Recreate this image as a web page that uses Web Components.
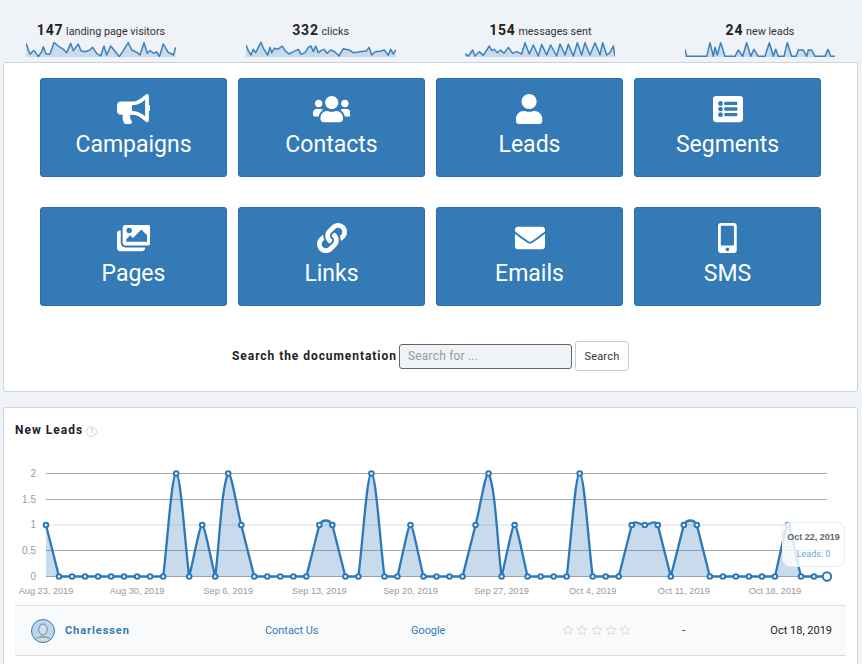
<!DOCTYPE html>
<html lang="en"><head><meta charset="utf-8"><title>Dashboard</title>
<style>
html,body{margin:0;padding:0;height:664px;overflow:hidden;background:#eff2f7;font-family:Roboto,"Liberation Sans",sans-serif;color:#222}
</style></head><body>
<dash-page>
  <stat-row>
    <stat-item value="147" points="78,100 90,133 100,122 105,125 115,140 125,125 130,110 138,132 150,132 162,98 175,108 190,118 200,128 212,100 220,122 235,102 243,122 255,125 270,120 278,112 290,130 302,138 312,108 320,135 332,108 350,130 358,140 372,118 385,98 395,120 412,128 420,135 432,98 442,130 450,122 462,130 470,125 478,140 490,102 505,128 512,130 520,135 527,112" origin="78">landing page visitors</stat-item>
    <stat-item value="332" points="63,105 70,122 78,135 85,118 92,128 100,112 108,97 115,115 128,135 135,112 140,128 148,115 158,118 172,108 180,122 192,132 205,125 220,118 228,133 240,128 250,112 258,108 265,125 272,108 280,128 288,122 298,118 306,130 318,120 330,126 342,138 355,116 372,120 385,128 400,126 415,124 425,122 432,112 440,135 450,125 465,124 478,120 490,136 497,118 505,132 512,120" origin="63">clicks</stat-item>
    <stat-item value="154" points="45,132 55,138 68,120 75,138 88,125 100,136 118,108 125,122 132,118 142,128 152,120 162,130 175,112 188,130 200,125 215,132 225,98 238,132 250,105 265,138 275,103 290,135 302,105 320,138 330,102 345,135 355,103 370,138 382,98 395,135 405,98 420,135 435,98 450,135 458,98 470,135 480,128 490,108 495,138" origin="45">messages sent</stat-item>
    <stat-item value="24" points="75,118 80,139 140,139 150,98 160,139 165,112 172,135 182,98 195,139 225,139 235,120 248,139 260,98 272,139 282,118 295,139 315,139 328,98 340,139 347,118 355,139 372,139 382,98 395,139 408,139 415,120 430,120 440,139 445,120 455,120 465,139 495,139 504,118 512,139 525,139" origin="75">new leads</stat-item>
  </stat-row>
  <dash-card class="menu">
    <tile-grid>
      <nav-tile icon="bullhorn">Campaigns</nav-tile>
      <nav-tile icon="users">Contacts</nav-tile>
      <nav-tile icon="user">Leads</nav-tile>
      <nav-tile icon="list">Segments</nav-tile>
      <nav-tile icon="images">Pages</nav-tile>
      <nav-tile icon="link">Links</nav-tile>
      <nav-tile icon="envelope">Emails</nav-tile>
      <nav-tile icon="mobile">SMS</nav-tile>
    </tile-grid>
    <doc-search></doc-search>
  </dash-card>
  <dash-card class="leads">
    <leads-panel></leads-panel>
  </dash-card>
</dash-page>
<script>
const ICONS={
bullhorn:['0 0 576 512','M576 240c0-23.63-12.95-44.04-32-55.12V32.01C544 23.26 537.02 0 512 0c-7.12 0-14.19 2.38-19.98 7.02l-85.03 68.03C364.28 109.19 310.66 128 256 128H64c-35.35 0-64 28.65-64 64v96c0 35.35 28.65 64 64 64h33.7c-1.39 10.48-2.18 21.14-2.18 32 0 39.77 9.26 77.35 25.56 110.94 5.19 10.69 16.52 17.06 28.4 17.06h74.28c26.05 0 41.69-29.84 25.9-50.56-16.4-21.52-26.15-48.36-26.15-77.44 0-11.11 1.62-21.79 4.41-32H256c54.66 0 108.28 18.81 150.98 52.95l85.03 68.03a32.023 32.023 0 0 0 19.98 7.02c24.92 0 32-22.78 32-32V295.13C563.05 284.04 576 263.63 576 240zm-96 141.42l-33.05-26.44C392.95 311.78 325.12 288 256 288v-96c69.12 0 136.95-23.78 190.95-66.98L480 98.58v282.84z'],
users:['0 0 640 512','M96 224c35.3 0 64-28.7 64-64s-28.7-64-64-64-64 28.7-64 64 28.7 64 64 64zm448 0c35.3 0 64-28.7 64-64s-28.7-64-64-64-64 28.7-64 64 28.7 64 64 64zm32 32h-64c-17.6 0-33.5 7.1-45.1 18.6 40.3 22.1 68.9 62 75.1 109.4h66c17.7 0 32-14.3 32-32v-32c0-35.3-28.7-64-64-64zm-256 0c61.9 0 112-50.1 112-112S381.9 32 320 32 208 82.1 208 144s50.1 112 112 112zm76.8 32h-8.3c-20.8 10-43.9 16-68.5 16s-47.6-6-68.5-16h-8.3C179.6 288 128 339.6 128 403.2V432c0 26.5 21.5 48 48 48h288c26.5 0 48-21.5 48-48v-28.8c0-63.6-51.6-115.2-115.2-115.2zm-223.7-13.4C161.5 263.1 145.6 256 128 256H64c-35.3 0-64 28.7-64 64v32c0 17.7 14.3 32 32 32h65.9c6.3-47.4 34.9-87.3 75.2-109.4z'],
user:['0 0 448 512','M224 256c70.7 0 128-57.3 128-128S294.7 0 224 0 96 57.3 96 128s57.3 128 128 128zm89.6 32h-16.7c-22.2 10.2-46.9 16-72.9 16s-50.6-5.8-72.9-16h-16.7C60.2 288 0 348.2 0 422.4V464c0 26.5 21.5 48 48 48h352c26.5 0 48-21.5 48-48v-41.6c0-74.2-60.2-134.4-134.4-134.4z'],
list:['0 0 512 512','M464 480H48c-26.51 0-48-21.49-48-48V80c0-26.51 21.49-48 48-48h416c26.51 0 48 21.49 48 48v352c0 26.51-21.49 48-48 48zM128 120c-22.091 0-40 17.909-40 40s17.909 40 40 40 40-17.909 40-40-17.909-40-40-40zm0 96c-22.091 0-40 17.909-40 40s17.909 40 40 40 40-17.909 40-40-17.909-40-40-40zm0 96c-22.091 0-40 17.909-40 40s17.909 40 40 40 40-17.909 40-40-17.909-40-40-40zm288-136v-32c0-6.627-5.373-12-12-12H204c-6.627 0-12 5.373-12 12v32c0 6.627 5.373 12 12 12h200c6.627 0 12-5.373 12-12zm0 96v-32c0-6.627-5.373-12-12-12H204c-6.627 0-12 5.373-12 12v32c0 6.627 5.373 12 12 12h200c6.627 0 12-5.373 12-12zm0 96v-32c0-6.627-5.373-12-12-12H204c-6.627 0-12 5.373-12 12v32c0 6.627 5.373 12 12 12h200c6.627 0 12-5.373 12-12z'],
images:['0 0 576 512','M480 416v16c0 26.51-21.49 48-48 48H48c-26.51 0-48-21.49-48-48V176c0-26.51 21.49-48 48-48h16v208c0 44.112 35.888 80 80 80h336zm96-80V80c0-26.51-21.49-48-48-48H144c-26.51 0-48 21.49-48 48v256c0 26.51 21.49 48 48 48h384c26.51 0 48-21.49 48-48zM256 128c0 26.51-21.49 48-48 48s-48-21.49-48-48 21.49-48 48-48 48 21.49 48 48zm-96 144l55.515-55.515c4.686-4.686 12.284-4.686 16.971 0L272 256l135.515-135.515c4.686-4.686 12.284-4.686 16.971 0L512 208v112H160v-48z'],
link:['0 0 512 512','M326.612 185.391c59.747 59.809 58.927 155.698.36 214.59-.11.12-.24.25-.36.37l-67.2 67.2c-59.27 59.27-155.699 59.262-214.96 0-59.27-59.26-59.27-155.7 0-214.96l37.106-37.106c9.84-9.84 26.786-3.3 27.294 10.606.648 17.722 3.826 35.527 9.69 52.721 1.986 5.822.567 12.262-3.783 16.612l-13.087 13.087c-28.026 28.026-28.905 73.66-1.155 101.96 28.024 28.579 74.086 28.749 102.325.51l67.2-67.19c28.191-28.191 28.073-73.757 0-101.83-3.701-3.694-7.429-6.564-10.341-8.569a16.037 16.037 0 0 1-6.947-12.606c-.396-10.567 3.348-21.456 11.698-29.806l21.054-21.055c5.521-5.521 14.182-6.199 20.584-1.731a152.482 152.482 0 0 1 20.522 17.197zM467.547 44.449c-59.261-59.262-155.69-59.27-214.96 0l-67.2 67.2c-.12.12-.25.25-.36.37-58.566 58.892-59.387 154.781.36 214.59a152.454 152.454 0 0 0 20.521 17.196c6.402 4.468 15.064 3.789 20.584-1.731l21.054-21.055c8.35-8.35 12.094-19.239 11.698-29.806a16.037 16.037 0 0 0-6.947-12.606c-2.912-2.005-6.64-4.875-10.341-8.569-28.073-28.073-28.191-73.639 0-101.83l67.2-67.19c28.239-28.239 74.3-28.069 102.325.51 27.75 28.3 26.872 73.934-1.155 101.96l-13.087 13.087c-4.35 4.35-5.769 10.79-3.783 16.612 5.864 17.194 9.042 34.999 9.69 52.721.509 13.906 17.454 20.446 27.294 10.606l37.106-37.106c59.271-59.259 59.271-155.699.001-214.959z'],
envelope:['0 0 512 512','M502.3 190.8c3.9-3.1 9.7-.2 9.7 4.7V400c0 26.5-21.5 48-48 48H48c-26.5 0-48-21.5-48-48V195.6c0-5 5.7-7.8 9.7-4.7 22.4 17.4 52.1 39.5 154.1 113.6 21.1 15.4 56.7 47.8 92.2 47.6 35.7.3 72-32.8 92.3-47.6 102-74.1 131.6-96.3 154-113.7zM256 320c23.2.4 56.6-29.2 73.4-41.4 132.7-96.3 142.8-104.7 173.4-128.7 5.8-4.5 9.2-11.5 9.2-18.9v-19c0-26.5-21.5-48-48-48H48C21.5 64 0 85.5 0 112v19c0 7.4 3.4 14.3 9.2 18.9 30.6 23.9 40.7 32.4 173.4 128.7 16.8 12.2 50.2 41.8 73.4 41.4z'],
mobile:['0 0 320 512','M272 0H48C21.5 0 0 21.5 0 48v416c0 26.5 21.5 48 48 48h224c26.5 0 48-21.5 48-48V48c0-26.5-21.5-48-48-48zM160 480c-17.7 0-32-14.3-32-32s14.3-32 32-32 32 14.3 32 32-14.3 32-32 32zm112-108c0 6.6-5.4 12-12 12H60c-6.6 0-12-5.4-12-12V60c0-6.6 5.4-12 12-12h200c6.6 0 12 5.4 12 12v312z']
};
function el(name,css,html,render){
  customElements.define(name,class extends HTMLElement{
    constructor(){super();this.attachShadow({mode:'open'})}
    connectedCallback(){
      const body=render?render(this):html;
      this.shadowRoot.innerHTML='<style>'+css+'</style>'+body;
    }
  });
}
el('dash-page',':host{display:flex;flex-direction:column;padding:0 4px 0 3px;box-sizing:border-box;width:862px}','<slot></slot>');
el('stat-row',':host{display:grid;grid-template-columns:repeat(4,150px);column-gap:69.67px;padding:21px 0 5px 23px;height:36px}','<slot></slot>');
el('stat-item',':host{display:flex;flex-direction:column;align-items:center;font-size:10.8px;color:#333}b{font-size:14px;font-weight:700;color:#222;letter-spacing:.8px}.t{line-height:18px;height:18px;white-space:nowrap}svg{display:block;width:150px;height:16px;margin-top:2px}','',h=>{
  const o=+h.getAttribute('origin'),pts=h.getAttribute('points');
  const first=pts.split(' ')[0].split(',')[0],last=pts.split(' ').pop().split(',')[0];
  return `<div class="t"><b>${h.getAttribute('value')}</b> <slot></slot></div>
  <svg viewBox="${o} 93 450 48" preserveAspectRatio="none" aria-hidden="true"><polygon points="${first},141 ${pts} ${last},141" fill="#c8dbec"/><polyline points="${pts}" fill="none" stroke="#3d80bd" stroke-width="4.5" stroke-linejoin="round"/></svg>`;
});
el('dash-card',':host{display:block;background:#fff;border:1px solid #cfd2d6;border-radius:3px;box-sizing:border-box}:host(.menu){height:330px;padding:15px 0 0 36px;margin-bottom:15px}:host(.leads){height:290px;padding:0 11px}','<slot></slot>');
el('tile-grid',':host{display:grid;grid-template-columns:repeat(4,187px);column-gap:11px;row-gap:30px}','<slot></slot>');
el('nav-tile',':host{display:flex;flex-direction:column;align-items:center;height:99px;box-sizing:border-box;background:#337ab7;border:1px solid #2e6da4;border-radius:3px;color:#fff;font-size:23px;padding-top:15px}svg{display:block;height:30px;fill:#fff}.l{line-height:30px;margin-top:6px}','',h=>{
  const [vb,d]=ICONS[h.getAttribute('icon')];const w=vb.split(' ')[2]/512*30;
  return `<svg viewBox="${vb}" width="${w}" height="30" aria-hidden="true"><path d="${d}"/></svg><div class="l"><slot></slot></div>`;
});
el('doc-search',':host{display:flex;align-items:center;justify-content:flex-start;margin-top:35px;padding-left:192px;height:30px}label{font-size:12px;font-weight:700;letter-spacing:.95px;color:#222;margin-right:2px;white-space:nowrap}.i{width:173px;height:25px;box-sizing:border-box;background:#eff2f7;border:1px solid #666;border-radius:3px;font-size:12px;color:#999;line-height:23px;padding-left:8px;letter-spacing:.2px}.b{margin-left:3px;width:54px;height:30px;box-sizing:border-box;background:#fff;border:1px solid #ccc;border-radius:3px;font-size:11px;color:#333;display:flex;align-items:center;justify-content:center;letter-spacing:.2px}',
 '<label>Search the documentation</label><div class="i">Search for ...</div><div class="b">Search</div>');
el('leads-panel',':host{display:block;position:relative}',"",()=>'<panel-title>New Leads</panel-title><line-chart></line-chart><lead-row></lead-row>');
el('panel-title',':host{display:flex;align-items:center;height:36px;padding-top:8px;box-sizing:border-box;font-size:12px;font-weight:700;letter-spacing:1px;color:#222}i{display:flex;align-items:center;justify-content:center;width:9px;height:9px;border:1px solid #d5d5d5;border-radius:50%;margin:2px 0 0 3px;font:normal 7px Roboto,sans-serif;color:#aaa;letter-spacing:0}','<slot></slot><i>?</i>');
const DATA=[1,0,0,0,0,0,0,0,0,0,2,0,1,0,2,1,0,0,0,0,0,1,1,0,0,2,0,0,1,0,0,0,0,1,2,0,1,0,0,0,0,2,0,0,0,1,1,1,0,1,1,0,0,0,0,0,0,1,0,0,0];
el('line-chart',':host{display:block;position:relative;height:161px}svg{display:block;width:831px;height:161px}text{font-family:"Liberation Sans",Arial,sans-serif;font-size:9.2px;fill:#999}.y{font-size:10px}.tip{position:absolute;left:767px;top:78px;width:63px;height:45px;box-sizing:border-box;border:1px solid #e8ecf2;border-radius:8px;background:rgba(255,255,255,.82);text-align:center;padding-top:9px;white-space:nowrap;font:700 9px "Liberation Sans",Arial,sans-serif;color:#666}.tip div{font:400 9px Roboto,sans-serif;color:#6ea6d8;margin-top:7px}','',()=>{
  const x=i=>46+i*781/60,y=v=>576.5-v*51.5;
  const P=DATA.map((v,i)=>({x:x(i),y:y(v),v}));
  const t=.4,top=473.5,bot=576.5;
  // handles: valley points keep a sharp corner, tops are rounded
  const cp=P.map((p,i)=>{
    const a=P[i-1]||p,b=P[i+1]||p;
    const d1=Math.hypot(p.x-a.x,p.y-a.y),d2=Math.hypot(b.x-p.x,b.y-p.y);
    const s=d1+d2||1,f1=t*d1/s,f2=t*d2/s;
    const c=v=>Math.min(bot,Math.max(top,v));
    let h={px:p.x-f1*(b.x-a.x),py:c(p.y-f1*(b.y-a.y)),nx:p.x+f2*(b.x-a.x),ny:c(p.y+f2*(b.y-a.y))};
    if(p.v===0){h={px:p.x+(a.x-p.x)/3,py:p.y+(a.y-p.y)/3,nx:p.x+(b.x-p.x)/3,ny:p.y+(b.y-p.y)/3}}
    else if(p.v===1&&a.v===0&&b.v===1){h.px=p.x+(a.x-p.x)/3;h.py=p.y+(a.y-p.y)/3;h.nx=p.x+3;h.ny=p.y-6}
    else if(p.v===1&&a.v===1&&b.v===0){h.nx=p.x+(b.x-p.x)/3;h.ny=p.y+(b.y-p.y)/3;h.px=p.x-3;h.py=p.y-6}
    else if(p.v===1&&a.v===1&&b.v===1){h.px=p.x-4;h.py=p.y;h.nx=p.x+4;h.ny=p.y}
    else if(a.v<p.v&&b.v<p.v&&a.v===b.v){const k=p.v===2?4.5:2.5;h={px:p.x-k,py:p.y,nx:p.x+k,ny:p.y}}
    return h;
  });
  let d=`M${P[0].x} ${P[0].y}`;
  for(let i=1;i<P.length;i++)d+=`C${cp[i-1].nx} ${cp[i-1].ny} ${cp[i].px} ${cp[i].py} ${P[i].x} ${P[i].y}`;
  const grid=[[473.5,'2'],[499.5,'1.5'],[525,'1'],[550.5,'0.5'],[576.5,'0']].map(([g,l],i)=>
    `<line x1="46" x2="827" y1="${g}" y2="${g}" stroke="${i==2?'#eee':'#a9a9a9'}" stroke-width="${i==2?2:1}"/><text class="y" x="36" y="${g+3}" text-anchor="end">${l}</text>`).join('');
  const labels=['Aug 23, 2019','Aug 30, 2019','Sep 6, 2019','Sep 13, 2019','Sep 20, 2019','Sep 27, 2019','Oct 4, 2019','Oct 11, 2019','Oct 18, 2019'].map((l,i)=>
    `<text x="${x(i*7)}" y="594" text-anchor="middle">${l}</text>`).join('');
  const dots=P.map((p,i)=>i==60?`<circle cx="${p.x}" cy="${p.y}" r="4.2" fill="#fff" stroke="#2f78b8" stroke-width="2"/>`:`<circle cx="${p.x}" cy="${p.y}" r="2.3" fill="#fff" stroke="#2f78b8" stroke-width="2"/>`).join('');
  return `<svg viewBox="15 444 831 161">${grid}${labels}
  <path d="${d}L827 576.5L46 576.5Z" fill="rgba(51,122,183,.27)"/><path d="${d}" fill="none" stroke="#2f78b8" stroke-width="2.3"/>${dots}</svg>
  <div class="tip">Oct 22, 2019<div>Leads: 0</div></div>`;
});
const STAR='<svg viewBox="0 0 24 24" width="12" height="12"><path d="M12 2.5l2.9 6.4 7 .8-5.2 4.7 1.4 6.9-6.1-3.500-6.1 3.500 1.400-6.900L2.100 9.700l7-.8z" fill="none" stroke="#d4d4d4" stroke-width="1.7"/></svg>';
el('lead-row',':host{display:grid;grid-template-columns:34px 200px 146px 153px 118px 50px 1fr;align-items:center;height:51px;box-sizing:border-box;background:#f8fafc;border-top:1px solid #ddd;border-bottom:1px solid #ddd;padding:0 14px 0 16px;font-size:10.9px;color:#337ab7}svg{display:block}.n{font-weight:700;font-size:11px;letter-spacing:.92px}.s{display:flex;gap:2.25px;margin:-2px 0 0 -2px}.d{color:#222}.r{color:#222;text-align:right;font-size:11px;white-space:nowrap}',
`<svg viewBox="0 0 24 24" width="24" height="24"><defs><clipPath id="c"><circle cx="12" cy="12" r="11.5"/></clipPath></defs><circle cx="12" cy="12" r="11.5" fill="#bdd6ec"/><g clip-path="url(#c)"><path d="M3.500 24c0-4.500 3-6 8.500-6s8.500 1.500 8.500 6z" fill="#d9d9d9" stroke="#4d6f8c" stroke-width=".8"/><ellipse cx="12" cy="10.500" rx="4.200" ry="5.500" fill="#cfdfee" stroke="#4d6f8c" stroke-width=".8"/></g><circle cx="12" cy="12" r="11.500" fill="none" stroke="#337ab7" stroke-width="1"/></svg>
<div class="n">Charlessen</div><div>Contact Us</div><div>Google</div><div class="s">${STAR.repeat(5)}</div><div class="d">-</div><div class="r">Oct 18, 2019</div>`);
</script>
</body></html>
